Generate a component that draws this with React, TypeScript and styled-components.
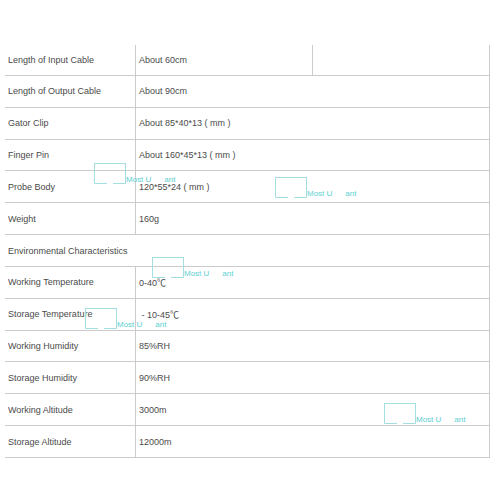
import React from "react";
import styled, { createGlobalStyle } from "styled-components";

const GlobalStyle = createGlobalStyle`
  html, body {
    margin: 0;
    padding: 0;
    background: #fff;
  }
  body {
    font-family: "Liberation Sans", "Noto Sans CJK SC", sans-serif;
  }
`;

const Page = styled.div`
  position: relative;
  width: 500px;
  height: 500px;
  padding-top: 45px;
  box-sizing: border-box;
`;

const Table = styled.div`
  margin-left: 5px;
  width: 485px;
  border-right: 1px solid #cbcbcb;
  box-sizing: border-box;
  font-size: 9px;
  color: #4a4a4a;
`;

const Row = styled.div<{ $h?: number }>`
  display: flex;
  height: ${(p) => p.$h ?? 31.83}px;
  border-bottom: 1px solid #cbcbcb;
  box-sizing: border-box;
`;

const Label = styled.div<{ $full?: boolean }>`
  display: flex;
  align-items: center;
  width: ${(p) => (p.$full ? "100%" : "130px")};
  padding-left: 3px;
  box-sizing: border-box;
  white-space: pre;
`;

const Value = styled.div<{ $w?: number }>`
  display: flex;
  align-items: center;
  ${(p) => (p.$w ? `width: ${p.$w}px;` : "flex: 1;")}
  border-left: 1px solid #cbcbcb;
  padding-left: 3px;
  box-sizing: border-box;
  white-space: pre;
`;

const Extra = styled.div`
  flex: 1;
  border-left: 1px solid #cbcbcb;
`;

const Mark = styled.div`
  position: absolute;
  display: flex;
  align-items: flex-end;
  font-size: 8px;
  line-height: 8px;
  color: #5ccfd0;
  pointer-events: none;
  white-space: pre;
`;

const Gap = styled.span`
  margin-left: 13px;
`;

const Bracket = () => (
  <svg width="32" height="21" viewBox="0 0 32 21">
    <path
      d="M0.5 0 V20.5 H13 M19 20.5 H31.5 V0 M0 0.5 H32"
      fill="none"
      stroke="#a3dfe0"
      strokeWidth="1"
    />
  </svg>
);

const Watermark: React.FC<{ x: number; y: number }> = ({ x, y }) => (
  <Mark style={{ left: x, top: y }}>
    <Bracket />
    <span>Most U</span>
    <Gap>ant</Gap>
  </Mark>
);

const rows: [string, string][] = [
  ["Length of Output Cable", "About 90cm"],
  ["Gator Clip", "About 85*40*13 ( mm )"],
  ["Finger Pin", "About 160*45*13 ( mm )"],
  ["Probe Body", "120*55*24 ( mm )"],
  ["Weight", "160g"],
];

const rows2: [string, string][] = [
  ["Working Temperature", "0-40\u2103"],
  ["Storage Temperature", " - 10-45\u2103"],
  ["Working Humidity", "85%RH"],
  ["Storage Humidity", "90%RH"],
  ["Working Altitude", "3000m"],
  ["Storage Altitude", "12000m"],
];

const marks = [
  { x: 94, y: 163 },
  { x: 275, y: 177 },
  { x: 152, y: 257 },
  { x: 85, y: 308 },
  { x: 384, y: 403 },
];

export default function App() {
  return (
    <>
      <GlobalStyle />
      <Page>
        <Table>
          <Row $h={31}>
            <Label>Length of Input Cable</Label>
            <Value $w={177}>About 60cm</Value>
            <Extra />
          </Row>
          {rows.map(([k, v]) => (
            <Row key={k}>
              <Label>{k}</Label>
              <Value>{v}</Value>
            </Row>
          ))}
          <Row>
            <Label $full>Environmental Characteristics</Label>
          </Row>
          {rows2.map(([k, v]) => (
            <Row key={k}>
              <Label>{k}</Label>
              <Value>{v}</Value>
            </Row>
          ))}
        </Table>
        {marks.map((m, i) => (
          <Watermark key={i} x={m.x} y={m.y} />
        ))}
      </Page>
    </>
  );
}
